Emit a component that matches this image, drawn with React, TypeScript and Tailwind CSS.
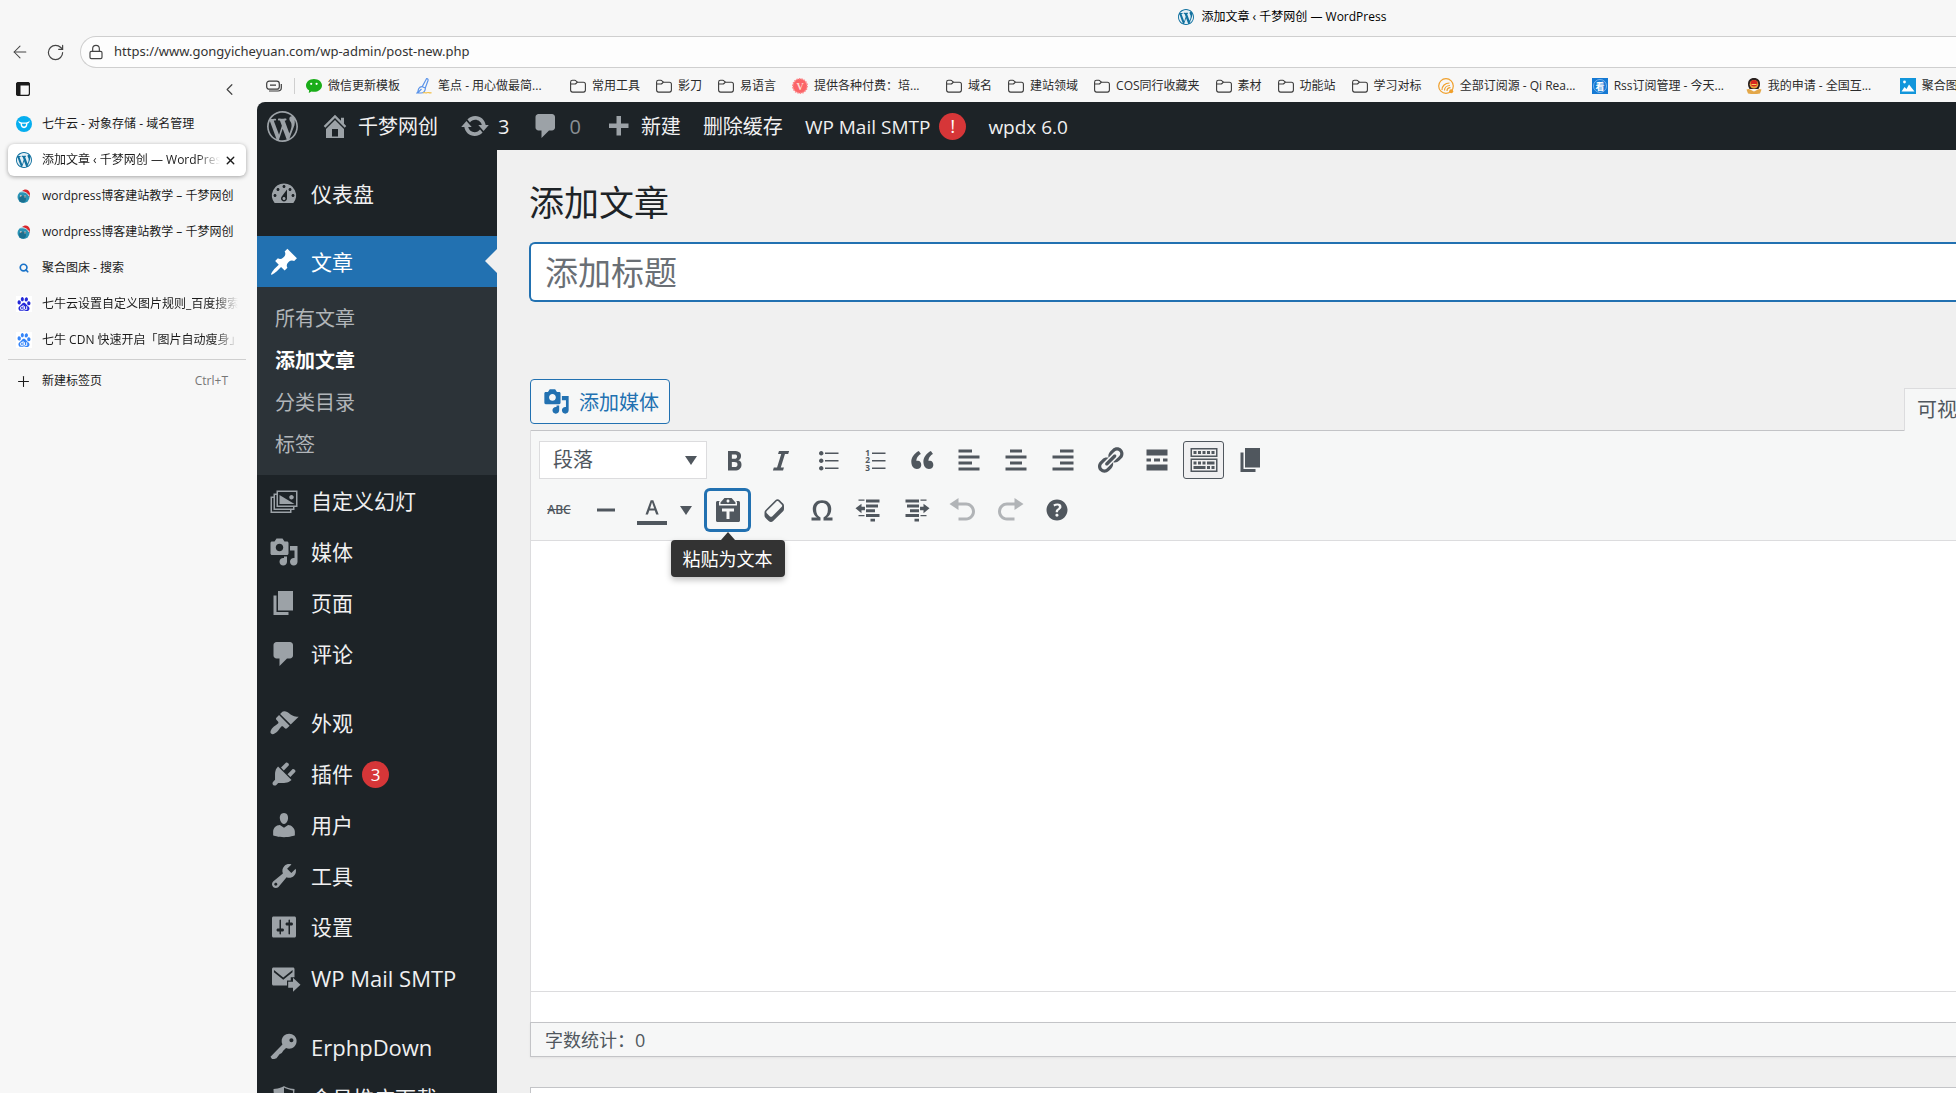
import React from 'react';
import { ArrowLeft, ChevronLeft, Lock, Plus, RotateCw, Search, X } from 'lucide-react';
import { SiBaidu } from 'react-icons/si';

const ICONS = {
    wordpress: 'M20 10c0-5.51-4.49-10-10-10C4.48 0 0 4.49 0 10c0 5.52 4.48 10 10 10 5.51 0 10-4.48 10-10zM7.78 15.37L4.37 6.22c.55-.02 1.17-.08 1.17-.08.5-.06.44-1.13-.06-1.11 0 0-1.45.11-2.37.11-.18 0-.37 0-.58-.01C4.12 2.69 6.87 1.11 10 1.11c2.33 0 4.45.87 6.05 2.34-.68-.11-1.65.39-1.65 1.58 0 .74.45 1.36.9 2.1.35.61.55 1.36.55 2.46 0 1.49-1.4 5-1.4 5l-3.03-8.37c.54-.02.82-.17.82-.17.5-.05.44-1.25-.06-1.22 0 0-1.44.12-2.38.12-.87 0-2.33-.12-2.33-.12-.5-.03-.56 1.2-.06 1.22l.92.08 1.26 3.41zM17.41 10c.24-.64.74-1.87.43-4.25.7 1.29 1.05 2.71 1.05 4.25 0 3.29-1.73 6.24-4.4 7.78.97-2.59 1.94-5.2 2.92-7.78zM6.1 18.09C3.12 16.65 1.11 13.53 1.11 10c0-1.3.23-2.48.72-3.59C3.25 10.3 4.67 14.2 6.1 18.09zm4.03-6.63l2.58 6.98c-.86.29-1.76.45-2.71.45-.79 0-1.57-.11-2.29-.33.81-2.38 1.62-4.74 2.42-7.1z',
    home: 'M16 8.5l1.53 1.53-1.06 1.06L10 4.6l-6.47 6.49-1.06-1.06L10 2.5l4 4v-2h2v4zm-6-2.46l6 5.99V18H4v-5.97zM12 17v-5H8v5h4z',
    update: 'M10.2 3.28c3.53 0 6.43 2.61 6.92 6h2.08l-3.5 4-3.5-4h2.32c-.45-1.97-2.21-3.45-4.32-3.45-1.45 0-2.73.71-3.54 1.78L4.95 5.66C6.23 4.2 8.11 3.28 10.2 3.28zm-.4 13.44c-3.52 0-6.43-2.61-6.92-6H.8l3.5-4c1.17 1.33 2.33 2.67 3.5 4H5.48c.45 1.97 2.21 3.45 4.32 3.45 1.45 0 2.73-.71 3.54-1.78l1.71 1.95c-1.28 1.46-3.15 2.38-5.25 2.38z',
    comments: 'M5 2h9c1.1 0 2 .9 2 2v7c0 1.1-.9 2-2 2h-2l-5 5v-5H5c-1.1 0-2-.9-2-2V4c0-1.1.9-2 2-2z',
    plus: 'M17 7v3h-5v5H9v-5H4V7h5V2h3v5h5z',
    dashboard: 'M3.76 16h12.48A7.998 7.998 0 0 0 10 3a7.998 7.998 0 0 0-6.24 13zM10 4c.55 0 1 .45 1 1s-.45 1-1 1-1-.45-1-1 .45-1 1-1zM6 6c.55 0 1 .45 1 1s-.45 1-1 1-1-.45-1-1 .45-1 1-1zm8 0c.55 0 1 .45 1 1s-.45 1-1 1-1-.45-1-1 .45-1 1-1zm-5.37 5.55L12 7v6c0 1.1-.9 2-2 2s-2-.9-2-2c0-.57.24-1.08.63-1.45zM4 10c.55 0 1 .45 1 1s-.45 1-1 1-1-.45-1-1 .45-1 1-1zm12 0c.55 0 1 .45 1 1s-.45 1-1 1-1-.45-1-1 .45-1 1-1zm-5 3c0-.55-.45-1-1-1s-1 .45-1 1 .45 1 1 1 1-.45 1-1z',
    pin: 'M10.44 3.02l1.82-1.82 6.36 6.35-1.83 1.82c-1.05-.68-2.48-.57-3.41.36l-.75.75c-.92.93-1.04 2.35-.35 3.41l-1.83 1.82-2.41-2.41-2.8 2.79c-.42.42-3.38 2.71-3.8 2.29s1.86-3.39 2.28-3.81l2.79-2.79L4.1 9.36l1.83-1.82c1.05.69 2.48.57 3.4-.36l.75-.75c.93-.92 1.05-2.35.36-3.41z',
    slides: 'M5 3h14v11h-2v2h-2v2H1V7h2V5h2V3zm13 10V4H6v9h12zm-3-4c-.83 0-1.5-.67-1.5-1.5S14.17 6 15 6s1.5.67 1.5 1.5S15.83 9 15 9zM7 6l10 6H7V6zm7 11v-1H3V8H2v9h12zm2-2v-1H5V6H4v9h12z',
    media: 'M13 11V4c0-.55-.45-1-1-1h-1.67L9 1H5L3.67 3H2c-.55 0-1 .45-1 1v7c0 .55.45 1 1 1h10c.55 0 1-.45 1-1zM7 4.5c1.38 0 2.5 1.12 2.5 2.5S8.38 9.5 7 9.5 4.5 8.38 4.5 7 5.62 4.5 7 4.5zM14 6h5v10.5c0 1.38-1.12 2.5-2.5 2.5S14 17.88 14 16.5s1.12-2.5 2.5-2.5c.17 0 .34.02.5.05V9h-3V6zm-4 8.05V13h2v3.5c0 1.38-1.12 2.5-2.5 2.5S7 17.88 7 16.5 8.12 14 9.5 14c.17 0 .34.02.5.05z',
    page: 'M6 15V2h10v13H6zm-1 1h8v2H3V5h2v11z',
    appearance: 'M14.48 11.06L7.41 3.99l1.5-1.5c.5-.56 2.3-.47 3.51.32 1.21.8 1.43 1.28 2.91 2.1 1.18.64 2.45 1.26 4.45.85zm-.71.71L6.7 4.7 4.93 6.47c-.39.39-.39 1.02 0 1.41l1.06 1.06c.39.39.39 1.03 0 1.42-.6.6-1.43 1.11-2.21 1.69-.35.26-.7.53-1.01.84C1.43 14.23.4 16.08 1.4 17.07c.99 1 2.84-.03 4.18-1.36.31-.31.58-.66.85-1.02.57-.78 1.08-1.61 1.69-2.21.39-.39 1.02-.39 1.41 0l1.06 1.06c.39.39 1.02.39 1.41 0z',
    plugins: 'M13.11 4.36L9.87 7.6 8 5.73l3.24-3.24c.35-.34 1.05-.2 1.56.32.52.51.66 1.21.31 1.55zm-8 1.77l.91-1.12 9.01 9.01-1.19.84c-.71.71-2.63 1.16-3.82 1.16H6.14L4.9 17.26c-.59.59-1.54.59-2.12 0-.59-.58-.59-1.53 0-2.12l1.24-1.24v-3.88c0-1.13.4-3.19 1.09-3.89zm7.26 3.97l3.24-3.24c.34-.35 1.04-.21 1.55.31.52.51.66 1.21.31 1.55l-3.24 3.25z',
    users: 'M10 9.25c-2.27 0-2.73-3.44-2.73-3.44C7 4.02 7.82 2 9.97 2c2.16 0 2.98 2.02 2.71 3.81 0 0-.41 3.44-2.68 3.44zm0 2.57L12.72 10c2.39 0 4.52 2.33 4.52 4.53v2.49s-3.65 1.13-7.24 1.13c-3.65 0-7.24-1.13-7.24-1.13v-2.49c0-2.25 1.94-4.48 4.47-4.48z',
    tools: 'M16.68 9.77c-1.34 1.34-3.3 1.67-4.95.99l-5.41 6.52c-.99.99-2.59.99-3.58 0s-.99-2.59 0-3.57l6.52-5.42c-.68-1.65-.35-3.61.99-4.95 1.28-1.28 3.12-1.62 4.72-1.06l-2.89 2.89 2.82 2.82 2.86-2.87c.53 1.58.18 3.39-1.08 4.65zM3.81 16.21c.4.39 1.04.39 1.43 0 .4-.4.4-1.04 0-1.43-.39-.4-1.03-.4-1.43 0-.39.39-.39 1.03 0 1.43z',
    settings: 'M18 16V4c0-.55-.45-1-1-1H3c-.55 0-1 .45-1 1v12c0 .55.45 1 1 1h14c.55 0 1-.45 1-1zM8 11h1c.55 0 1 .45 1 1s-.45 1-1 1H8v1.5c0 .28-.22.5-.5.5s-.5-.22-.5-.5V13H6c-.55 0-1-.45-1-1s.45-1 1-1h1V5.5c0-.28.22-.5.5-.5s.5.22.5.5V11zm5-2h-1c-.55 0-1-.45-1-1s.45-1 1-1h1V5.5c0-.28.22-.5.5-.5s.5.22.5.5V7h1c.55 0 1 .45 1 1s-.45 1-1 1h-1v5.5c0 .28-.22.5-.5.5s-.5-.22-.5-.5V9z',
    mail: 'M3 3h13c.55 0 1 .45 1 1v5.5h-2.5v2.2H12V15H3c-.55 0-1-.45-1-1V4c0-.55.45-1 1-1zm.3 1.7v1.5l6.2 4.9 6.2-4.9V4.7l-6.2 4.9zM12.8 12.5h3.2V9.800l5 4.700-5 4.700v-2.700h-3.200z',
    key: 'M16.95 2.58c1.96 1.95 1.96 5.12 0 7.07-1.51 1.51-3.75 1.84-5.59 1.01l-1.87 1.81-.99 1.51-1.5.8L5 17.5 3.5 18H2l-1-1.5 7.95-8.19c-.92-1.87-.62-4.18.93-5.73 1.95-1.96 5.12-1.96 7.07 0zm-2.01 4.29c.74 0 1.33-.6 1.33-1.34 0-.73-.59-1.33-1.33-1.33-.73 0-1.33.6-1.33 1.33 0 .74.6 1.34 1.33 1.34z',
    shield: 'M10 2s3 2 7 2c0 11-7 14-7 14S3 15 3 4c4 0 7-2 7-2zm0 8h5s1-1 1-5c0 0-5-1-6-2v7H5c1 4 5 7 5 7v-7z',
    bold: 'M6 4v13h4.54c1.37 0 2.46-.33 3.26-1 .8-.66 1.2-1.58 1.2-2.77 0-.84-.17-1.51-.51-2.01s-.9-.85-1.67-1.03v-.09c.57-.1 1.02-.4 1.36-.9s.51-1.13.51-1.91c0-1.14-.39-1.98-1.17-2.5C12.75 4.26 11.5 4 9.78 4H6zm2.57 5.15V6.26h1.36c.73 0 1.27.11 1.61.32.34.22.51.58.51 1.07 0 .54-.16.92-.47 1.15s-.82.35-1.51.35h-1.5zm0 2.19h1.6c1.44 0 2.16.53 2.16 1.61 0 .6-.17 1.05-.51 1.34s-.86.43-1.57.43H8.57v-3.38z',
    italic: 'M14.78 6h-2.13l-2.8 9h2.12l-.62 2H4.6l.62-2h2.14l2.8-9H8.03l.62-2h6.75z',
    bullets: 'M5.5 7C4.67 7 4 6.33 4 5.5 4 4.68 4.67 4 5.5 4 6.32 4 7 4.68 7 5.5 7 6.33 6.32 7 5.5 7zM8 5h9v1H8V5zm-2.5 7c-.83 0-1.5-.67-1.5-1.5C4 9.68 4.67 9 5.5 9c.82 0 1.5.68 1.5 1.5 0 .83-.68 1.5-1.5 1.5zM8 10h9v1H8v-1zm-2.5 7c-.83 0-1.5-.67-1.5-1.5 0-.82.67-1.5 1.5-1.5.82 0 1.5.68 1.5 1.5 0 .83-.68 1.5-1.5 1.5zM8 15h9v1H8v-1z',
    quote: 'M9.49 13.22c0-.74-.2-1.38-.61-1.9-.62-.78-1.83-.88-2.53-.72-.29-1.65 1.11-3.75 2.92-4.65L7.88 4c-2.73 1.3-5.42 4.28-4.96 8.05C3.21 14.43 4.59 16 6.54 16c.85 0 1.56-.25 2.12-.75s.83-1.18.83-2.03zm8.05 0c0-.74-.2-1.38-.61-1.9-.63-.78-1.83-.88-2.53-.72-.29-1.65 1.11-3.75 2.92-4.65L15.93 4c-2.73 1.3-5.41 4.28-4.95 8.05.29 2.38 1.66 3.95 3.61 3.95.85 0 1.56-.25 2.12-.75s.83-1.18.83-2.03z',
    alignLeft: 'M12 5V3H3v2h9zm5 4V7H3v2h14zm-5 4v-2H3v2h9zm5 4v-2H3v2h14z',
    alignCenter: 'M14 5V3H6v2h8zm3 4V7H3v2h14zm-3 4v-2H6v2h8zm3 4v-2H3v2h14z',
    alignRight: 'M17 5V3H8v2h9zm0 4V7H3v2h14zm0 4v-2H8v2h9zm0 4v-2H3v2h14z',
    link: 'M17.74 2.76c1.68 1.69 1.68 4.41 0 6.1l-1.53 1.52c-1.12 1.12-2.7 1.47-4.14 1.09l2.62-2.61.76-.77.76-.76c.84-.84.84-2.2 0-3.04-.84-.85-2.2-.85-3.04 0l-.77.76-3.38 3.38c-.37-1.44-.02-3.02 1.1-4.14l1.52-1.53c1.69-1.68 4.42-1.68 6.1 0zM8.59 13.43l5.34-5.34c.42-.42.42-1.1 0-1.52-.44-.43-1.13-.39-1.53 0l-5.33 5.34c-.42.42-.42 1.1 0 1.52.44.43 1.13.39 1.52 0zm-.76 2.29l4.14-4.15c.38 1.44.03 3.02-1.09 4.14l-1.52 1.53c-1.69 1.68-4.41 1.68-6.1 0-1.68-1.68-1.68-4.42 0-6.1l1.53-1.52c1.12-1.12 2.7-1.47 4.14-1.1l-4.14 4.15c-.85.84-.85 2.2 0 3.05.84.84 2.2.84 3.04 0z',
    more: 'M17 7V3H3v4h14zM6 11V9H3v2h3zm6 0V9H8v2h4zm5 0V9h-3v2h3zm0 6v-4H3v4h14z',
    kitchensink: 'M19 2v6H1V2h18zm-1 5V3H2v4h16zM5 4v2H3V4h2zm3 0v2H6V4h2zm3 0v2H9V4h2zm3 0v2h-2V4h2zm3 0v2h-2V4h2zm2 5v9H1V9h18zm-1 8v-7H2v7h16zM5 11v2H3v-2h2zm3 0v2H6v-2h2zm3 0v2H9v-2h2zm6 0v2h-5v-2h5zm-6 3v2H3v-2h8zm3 0v2h-2v-2h2zm3 0v2h-2v-2h2z',
    minus: 'M4 9h12v2H4V9z',
    textColor: 'M13.23 15h1.9L11 4H9L5 15h1.88l1.07-3h4.18zm-1.53-4.54H8.51L10 5.6z',
    paste: 'M12.38 2L15 5v1H5V5l2.64-3h4.74zM10 5c.55 0 1-.44 1-1 0-.55-.45-1-1-1s-1 .45-1 1c0 .56.45 1 1 1zm5.45-1H17c.55 0 1 .45 1 1v12c0 .56-.45 1-1 1H3c-.55 0-1-.44-1-1V5c0-.55.45-1 1-1h1.55L4 4.63V7h12V4.63zM14 11V9H6v2h3v5h2v-5h3z',
    eraser: 'M14.29 4.59l1.1 1.11c.41.4.61.94.61 1.47v2.12c0 .53-.2 1.07-.61 1.47l-6.63 6.63c-.4.41-.94.61-1.47.61s-1.07-.2-1.47-.61l-1.11-1.1-1.1-1.11c-.41-.4-.61-.94-.61-1.47v-2.12c0-.54.2-1.07.61-1.48l6.63-6.62c.4-.41.94-.61 1.47-.61s1.06.2 1.47.61zm-6.21 9.7l6.42-6.42c.39-.39.39-1.03 0-1.43L12.36 4.3c-.19-.19-.45-.29-.72-.29s-.52.1-.71.29l-6.42 6.42c-.39.4-.39 1.04 0 1.43l2.14 2.14c.38.38 1.04.38 1.43 0z',
    omega: 'M10 5.4c1.27 0 2.24.36 2.91 1.08.66.71 1 1.76 1 3.13 0 1.28-.23 2.37-.69 3.27-.47.89-1.27 1.52-2.22 2.12v2h6v-2h-3.69c.92-.64 1.62-1.34 2.12-2.34.49-1.01.74-2.13.74-3.35 0-1.78-.55-3.19-1.65-4.22S11.92 3.54 10 3.54s-3.43.53-4.52 1.57c-1.1 1.04-1.65 2.44-1.65 4.2 0 1.21.24 2.31.73 3.33.48 1.01 1.19 1.71 2.1 2.36H3v2h6v-2c-.98-.64-1.8-1.28-2.24-2.17-.45-.89-.67-1.96-.67-3.22 0-1.37.33-2.41 1-3.13C7.75 5.76 8.72 5.4 10 5.4z',
    outdent: 'M3 3h4v.8H3zM8 3h9v2H8zM8 6.3h8v2H8zM8 9.5h6v2H8zM8 12.6h9v2H8zM11 15.8h3v1.8h-3zM3 13.3h4v.8H3zM7.3 7.8v2.3H5v2L1 8.9 5 5.8v2z',
    indent: 'M13 3h4v.8h-4zM3 3h9v2H3zM4 6.3h8v2H4zM6 9.5h6v2H6zM3 12.6h9v2H3zM9 15.8h3v1.8H9zM13 13.3h4v.8h-4zM12.7 7.8v2.3H15v2l4-3.2-4-3.1v2z',
    undo: 'M12 5H7V2L1 6l6 4V7h5c2.2 0 4 1.8 4 4s-1.8 4-4 4H7v2h5c3.3 0 6-2.7 6-6s-2.7-6-6-6z',
    redo: 'M8 5h5V2l6 4-6 4V7H8c-2.2 0-4 1.8-4 4s1.8 4 4 4h5v2H8c-3.3 0-6-2.7-6-6s2.7-6 6-6z',
    help: 'M17 10c0-3.87-3.14-7-7-7-3.87 0-7 3.13-7 7s3.13 7 7 7c3.86 0 7-3.13 7-7zm-6.3 1.48H9.14v-.43c0-.38.08-.7.24-.98s.46-.57.88-.89c.41-.29.68-.53.81-.71.14-.18.2-.39.2-.62 0-.25-.09-.44-.28-.58-.19-.13-.45-.19-.79-.19-.58 0-1.25.19-2 .57l-.64-1.28c.87-.49 1.8-.74 2.77-.74.81 0 1.45.2 1.92.58.48.39.71.91.71 1.55 0 .43-.09.8-.29 1.11-.19.32-.57.67-1.11 1.06-.38.28-.61.49-.71.63-.1.15-.15.34-.15.57v.35zm-1.47 2.74c-.18-.17-.27-.42-.27-.73 0-.33.08-.58.26-.75s.43-.25.77-.25c.32 0 .57.09.75.26s.27.42.27.74c0 .3-.09.55-.27.72-.18.18-.43.27-.75.27-.33 0-.58-.09-.76-.26z',
};

type IconName = keyof typeof ICONS;

const DashIcon = ({ name, className = 'w-[30px] h-[30px]' }: { name: IconName; className?: string }) => (
    <svg viewBox="0 0 20 20" fill="currentColor" fillRule={name === 'shield' || name === 'mail' ? 'evenodd' : 'nonzero'} className={`shrink-0 overflow-visible ${className}`} aria-hidden="true">
        <path d={ICONS[name]} />
    </svg>
);

/* Favicons */
const WpFavicon = () => (
    <span className="w-4 h-4 shrink-0 rounded-full bg-[#e4eff5] flex">
        <DashIcon name="wordpress" className="w-4 h-4 text-[#11719f]" />
    </span>
);

const QiniuFavicon = () => (
    <svg viewBox="0 0 16 16" className="w-4 h-4 shrink-0">
        <circle cx="8" cy="8" r="8" fill="#06aeef" />
        <path d="M2.5 4.5c.8 1.6 2.3 2 5.5 2s4.7-.4 5.5-2c.2 1.7-.6 2.7-2 3.1-.2 3.2-1.2 4.6-3.5 4.6s-3.3-1.4-3.5-4.6c-1.400-.4-2.200-1.400-2-3.100z" fill="#fff" />
        <path d="M6 7.800h4c0 1.800-.6 2.700-2 2.700s-2-.9-2-2.700z" fill="#06aeef" />
    </svg>
);

const BirdFavicon = () => (
    <svg viewBox="0 0 16 16" className="w-4 h-4 shrink-0">
        <circle cx="7.5" cy="9" r="6" fill="#2a93b5" />
        <circle cx="6.5" cy="11" r="3.5" fill="#1b6f90" />
        <path d="M6 3C8.500 .5 13 .8 14 5.500l-.5 3.500c-1-3-3.500-5-7.500-6z" fill="#d8262c" />
        <path d="M4.500 4c3-.8 7 .6 8.500 4" stroke="#fff" strokeWidth=".8" fill="none" />
        <circle cx="5" cy="8" r="1.100" fill="#cfe6ee" />
        <circle cx="9" cy="8.500" r="1.100" fill="#cfe6ee" />
        <circle cx="5.200" cy="8.200" r=".6" fill="#222" />
        <circle cx="9" cy="8.700" r=".6" fill="#222" />
    </svg>
);

const FolderIcon = () => (
    <svg viewBox="0 0 16 16" fill="none" stroke="#3b3b3b" strokeWidth="1.1" className="w-4 h-4 shrink-0">
        <path d="M.6 4.2c0-1.2.7-1.9 1.9-1.9h2.3c.5 0 .9.2 1.2.5l1.500 1.400h5.900c1.200 0 2 .8 2 2v5.900c0 1.200-.8 2-2 2H2.600c-1.200 0-2-.8-2-2z" />
        <path d="M.7 6h4.100c.5 0 .9-.2 1.200-.5l1.400-1.300" />
    </svg>
);

const WechatIcon = () => (
    <svg viewBox="0 0 16 16" className="w-4 h-4 shrink-0">
        <path d="M8 1c4.4 0 8 2.8 8 6.4s-3.6 6.4-8 6.4c-.9 0-1.7-.1-2.5-.3L2.8 15l.3-2.7C1.2 11.2 0 9.4 0 7.4 0 3.8 3.6 1 8 1z" fill="#1aad19" />
        <circle cx="5.2" cy="5.8" r="1.1" fill="#fff" />
        <circle cx="10.6" cy="5.8" r="1.1" fill="#fff" />
    </svg>
);

const PenIcon = () => (
    <svg viewBox="0 0 16 16" fill="none" className="w-4 h-4 shrink-0">
        <path d="M10.5.7c1.3-.2 1.8.5 1.5 1.800L9.300 10 6.200 8.700zM6.200 8.700L9.300 10c.3 3-1.800 5-4.300 5H1c1.500-1 .8-2.800 1.800-4.500.8-1.300 2-1.900 3.400-1.800zM2 14.500l3.500-3.500" stroke="#5b94ea" strokeWidth="1.2" />
        <path d="M7 15c1.500-1.300 2.500.5 4-.3s2 .6 4.500-.1" stroke="#f2c14e" strokeWidth="1.2" />
    </svg>
);

const VipIcon = () => (
    <svg viewBox="0 0 16 16" className="w-4 h-4 shrink-0">
        <circle cx="8" cy="8" r="7.2" fill="#fb6467" stroke="#fb8a8c" strokeWidth="1.5" strokeDasharray="1.5 1" />
        <text x="8" y="12" fontSize="10" fontWeight="700" textAnchor="middle" fill="#ffd9d4" fontFamily="Liberation Serif, serif">V</text>
    </svg>
);

const RssIcon = () => (
    <svg viewBox="0 0 16 16" fill="none" stroke="#f0a02c" className="w-4 h-4 shrink-0">
        <circle cx="8" cy="8" r="7.3" strokeWidth="1.2" />
        <path d="M4 12C4 8 7 5 11.500 5M6.500 12.500c0-3 2.300-5 5.500-5M9 13c0-2 1.300-3.300 3.500-3.300" strokeWidth="1.2" />
        <circle cx="13.2" cy="13.2" r="2" fill="#f0a02c" stroke="none" />
    </svg>
);

const KanIcon = () => (
    <svg viewBox="0 0 16 16" className="w-4 h-4 shrink-0">
        <rect width="16" height="16" fill="#1579d3" />
        <circle cx="8" cy="8" r="6.5" fill="none" stroke="#8fc4f5" strokeWidth=".8" />
        <text x="8" y="11.5" fontSize="9" fontWeight="700" textAnchor="middle" fill="#fff" fontFamily="Noto Sans CJK SC, sans-serif">看</text>
    </svg>
);

const PoliceIcon = () => (
    <svg viewBox="0 0 16 16" className="w-4 h-4 shrink-0">
        <path d="M8 0c4 0 6 2.5 6 6 0 2-.7 3.500-1.500 5H3.500C2.700 9.500 2 8 2 6c0-3.500 2-6 6-6z" fill="#2a211f" />
        <circle cx="8" cy="6.200" r="4.300" fill="#e9a13b" />
        <circle cx="8" cy="5.200" r="3.300" fill="#d7281f" />
        <path d="M5.500 6h5v1h-5z" fill="#f6d35a" />
        <path d="M.5 11.500c1.500-.8 3-.7 4 .3l3.500 1.700 3.500-1.700c1-1 2.500-1.100 4-.3L14 15.500l-3 .5H5l-3-.5z" fill="#e3a748" />
    </svg>
);

const PictureIcon = () => (
    <svg viewBox="0 0 16 16" className="w-4 h-4 shrink-0">
        <rect width="16" height="16" fill="#1296db" />
        <circle cx="4.500" cy="4" r="1.400" fill="#fff" />
        <path d="M1.500 13.500l3-4.500 2 2 2.500-4.500 5.500 7z" fill="#fff" />
    </svg>
);

const sideTabs = [
    { title: '七牛云 - 对象存储 - 域名管理', icon: <QiniuFavicon /> },
    { title: '添加文章 ‹ 千梦网创 — WordPress', icon: <WpFavicon />, active: true, fade: true },
    { title: 'wordpress博客建站教学 – 千梦网创', icon: <BirdFavicon /> },
    { title: 'wordpress博客建站教学 – 千梦网创', icon: <BirdFavicon /> },
    { title: '聚合图床 - 搜索', icon: <Search className="w-4 h-4 p-[3px] shrink-0 text-[#1a73c9]" strokeWidth={4} /> },
    { title: '七牛云设置自定义图片规则_百度搜索', icon: <SiBaidu className="w-4 h-4 p-px shrink-0 bg-white text-[#2529d8]" />, fade: true },
    { title: '七牛 CDN 快速开启「图片自动瘦身」', icon: <SiBaidu className="w-4 h-4 p-px shrink-0 bg-white text-[#3585f9]" />, fade: true },
];

const bookmarks = [
    { title: '微信更新模板', icon: <WechatIcon /> },
    { title: '笔点 - 用心做最简...', icon: <PenIcon />, long: true },
    { title: '常用工具', icon: <FolderIcon /> },
    { title: '影刀', icon: <FolderIcon /> },
    { title: '易语言', icon: <FolderIcon /> },
    { title: '提供各种付费：培...', icon: <VipIcon />, long: true },
    { title: '域名', icon: <FolderIcon /> },
    { title: '建站领域', icon: <FolderIcon /> },
    { title: 'COS同行收藏夹', icon: <FolderIcon /> },
    { title: '素材', icon: <FolderIcon /> },
    { title: '功能站', icon: <FolderIcon /> },
    { title: '学习对标', icon: <FolderIcon /> },
    { title: '全部订阅源 - Qi Rea...', icon: <RssIcon />, long: true },
    { title: 'Rss订阅管理 - 今天...', icon: <KanIcon />, long: true },
    { title: '我的申请 - 全国互...', icon: <PoliceIcon />, long: true },
    { title: '聚合图', icon: <PictureIcon /> },
];

const menuGroups: { label: string; icon: IconName; badge?: number }[][] = [
    [
        { label: '自定义幻灯', icon: 'slides' },
        { label: '媒体', icon: 'media' },
        { label: '页面', icon: 'page' },
        { label: '评论', icon: 'comments' },
    ],
    [
        { label: '外观', icon: 'appearance' },
        { label: '插件', icon: 'plugins', badge: 3 },
        { label: '用户', icon: 'users' },
        { label: '工具', icon: 'tools' },
        { label: '设置', icon: 'settings' },
        { label: 'WP Mail SMTP', icon: 'mail' },
    ],
    [
        { label: 'ErphpDown', icon: 'key' },
        { label: '会员推广下载', icon: 'shield' },
    ],
];

const MenuItem = ({ label, icon, badge }: { label: string; icon: IconName; badge?: number }) => (
    <a href="#" className="flex items-center h-[51px] pl-3 text-[#f0f0f1] whitespace-nowrap">
        <DashIcon name={icon} className="w-[30px] h-[30px] text-[#9ca2a7]" />
        <span className={`ml-3 pt-[2px] ${/^[A-Z]/.test(label) ? 'text-[22px]' : 'text-[21px]'}`}>{label}</span>
        {badge && (
            <span className="ml-[9px] mt-[2px] w-[27px] h-[27px] rounded-full bg-[#d63638] text-white text-[17px] flex items-center justify-center">{badge}</span>
        )}
    </a>
);

const ToolButton = ({ name, label, active, disabled }: { name: IconName; label: string; active?: boolean; disabled?: boolean }) => (
    <button
        aria-label={label}
        disabled={disabled}
        className={`w-[41px] h-[38px] shrink-0 flex items-center justify-center rounded-[3px] border ${active ? 'border-[#50575e] bg-[#f0f0f1]' : 'border-transparent'} ${disabled ? 'text-[#b1b4b7]' : 'text-[#50575e]'}`}
    >
        <DashIcon name={name} />
    </button>
);

const Caret = () => <span className="border-x-[6px] border-x-transparent border-t-[9px] border-t-[#50575e]" />;

function BrowserHeader() {
    return (
        <header className="shrink-0">
            <div className="h-9 pb-[2px] pl-[60.2%] flex items-center gap-2 text-xs text-black whitespace-nowrap">
                <WpFavicon />
                <span>添加文章 ‹ 千梦网创 — WordPress</span>
            </div>
            <div className="flex items-center h-8 pl-[10px]">
                <button aria-label="返回"><ArrowLeft className="w-5 h-5 text-[#444]" strokeWidth={1.25} /></button>
                <button aria-label="刷新" className="ml-4"><RotateCw className="w-[19px] h-[19px] text-[#444]" strokeWidth={1.5} /></button>
                <div className="ml-[15px] flex-1 h-8 flex items-center gap-[10px] pl-[7px] bg-[#fdfdfd] border border-r-0 border-[#cfcfcf] rounded-l-full">
                    <Lock className="w-4 h-4 text-[#444] shrink-0" strokeWidth={1.75} />
                    <input
                        aria-label="地址"
                        className="flex-1 bg-transparent outline-none text-[13px] font-['Noto_Sans',sans-serif] text-[#333]"
                        defaultValue="https://www.gongyicheyuan.com/wp-admin/post-new.php"
                    />
                </div>
            </div>
        </header>
    );
}

function VerticalTabs() {
    return (
        <aside className="w-[257px] shrink-0 text-xs text-[#1b1b1b]">
            <div className="flex items-center justify-between h-[38px] pt-1 pl-4 pr-[18px]">
                <svg viewBox="0 0 14 14" className="w-[14px] h-[14px]">
                    <rect x=".6" y=".6" width="12.8" height="12.8" rx="2" fill="none" stroke="#1b1b1b" strokeWidth="1.2" />
                    <path d="M0 2c0-1 1-2 2-2h10c1 0 2 1 2 2v1.500H4.500V14H2c-1 0-2-1-2-2z" fill="#1b1b1b" />
                </svg>
                <button aria-label="收起"><ChevronLeft className="w-[19px] h-[19px] text-[#444]" strokeWidth={1.5} /></button>
            </div>
            <ul>
                {sideTabs.map((tab, i) => (
                    <li key={i} className="h-9 flex items-center pl-2 pr-[11px]">
                        <a
                            href="#"
                            className={`flex-1 min-w-0 h-8 flex items-center pl-2 pr-2 rounded-md ${tab.active ? 'bg-white shadow-[0_1px_4px_rgba(0,0,0,0.35)]' : ''}`}
                        >
                            {tab.icon}
                            <span className={`ml-[10px] flex-1 overflow-hidden whitespace-nowrap ${tab.fade ? '[mask-image:linear-gradient(to_right,black_calc(100%-24px),transparent)]' : ''}`}>{tab.title}</span>
                            {tab.active && <X className="ml-1 mr-px w-[13px] h-[13px] shrink-0" strokeWidth={2.5} />}
                        </a>
                    </li>
                ))}
            </ul>
            <div className="ml-2 mr-[11px] mt-px border-t border-[#cfcfcf]" />
            <button className="w-full h-[42px] flex items-center pl-[15px] pr-[29px]">
                <Plus className="w-[17px] h-[17px]" strokeWidth={1.5} />
                <span className="ml-[10px]">新建标签页</span>
                <span className="ml-auto text-[#767676]">Ctrl+T</span>
            </button>
        </aside>
    );
}

function BookmarkBar() {
    return (
        <nav className="h-[34px] pt-[2px] shrink-0 flex items-center pl-[9px] text-xs text-[#2b2b2b] whitespace-nowrap overflow-hidden">
            <svg viewBox="0 0 16 16" fill="none" stroke="#3b3b3b" strokeWidth="1.2" className="w-4 h-4 shrink-0">
                <rect x=".7" y="3.2" width="12.6" height="8" rx="2.5" />
                <path d="M4 7.200h6M3 13h9c2 0 3.300-1.300 3.300-3.200V6" />
            </svg>
            <span className="ml-3 mr-[11px] w-px h-4 bg-[#cfcfcf] shrink-0" />
            <div className="flex items-center gap-4">
                {bookmarks.map(b => (
                    <a key={b.title} href="#" className="flex items-center gap-[6px] shrink-0">
                        {b.icon}
                        <span className={b.long ? 'w-[116px]' : ''}>{b.title}</span>
                    </a>
                ))}
            </div>
        </nav>
    );
}

function AdminBar() {
    return (
        <nav className="h-12 shrink-0 bg-[#1d2327] flex items-center gap-[22px] pl-[10px] text-xl text-[#f0f0f1] whitespace-nowrap">
            <a href="#" aria-label="WordPress"><DashIcon name="wordpress" className="w-[31px] h-[31px] text-[#9ca2a7]" /></a>
            <a href="#" className="flex items-center gap-2">
                <DashIcon name="home" className="w-[30px] h-[30px] text-[#9ca2a7]" />
                <span className="pt-[2px]">千梦网创</span>
            </a>
            <a href="#" className="flex items-center gap-2">
                <DashIcon name="update" className="w-[30px] h-[30px] text-[#9ca2a7]" />
                <span className="pt-[2px]">3</span>
            </a>
            <a href="#" className="flex items-center gap-2 text-[#8a8f94]">
                <DashIcon name="comments" className="w-[30px] h-[30px] text-[#9ca2a7]" />
                <span className="pt-[2px]">0</span>
            </a>
            <a href="#" className="flex items-center gap-2">
                <DashIcon name="plus" className="mt-[3px] w-[30px] h-[30px] text-[#9ca2a7]" />
                <span className="pt-[2px]">新建</span>
            </a>
            <a href="#" className="pt-[2px]">删除缓存</a>
            <a href="#" className="flex items-center text-[19px]">
                <span className="pt-[2px]">WP Mail SMTP</span>
                <span className="ml-[9px] w-[27px] h-[27px] rounded-full bg-[#d63638] text-white flex items-center justify-center">!</span>
            </a>
            <a href="#" className="pt-[2px] text-[19px]">wpdx 6.0</a>
        </nav>
    );
}

function AdminMenu() {
    return (
        <aside className="w-[240px] shrink-0 bg-[#1d2327] pt-[18px]">
            <MenuItem label="仪表盘" icon="dashboard" />
            <a href="#" className="relative mt-[17px] h-[51px] pl-3 flex items-center bg-[#2271b1] text-white text-[21px]">
                <DashIcon name="pin" />
                <span className="ml-3 pt-[2px]">文章</span>
                <span className="absolute right-0 top-[13px] border-y-[12px] border-y-transparent border-r-[12px] border-r-[#f0f0f0]" />
            </a>
            <ul className="bg-[#2c3338] pt-[11px] pb-[9px] text-xl text-[#b1b5b9]">
                {['所有文章', '添加文章', '分类目录', '标签'].map(item => (
                    <li key={item}>
                        <a href="#" className={`h-[42px] pl-[18px] flex items-center ${item === '添加文章' ? 'font-bold text-white' : ''}`}>{item}</a>
                    </li>
                ))}
            </ul>
            {menuGroups.map((group, i) => (
                <div key={i} className="mb-[18px]">
                    {group.map(item => <MenuItem key={item.label} {...item} />)}
                </div>
            ))}
        </aside>
    );
}

function Editor() {
    return (
        <section>
            <div className="flex justify-between items-end h-[51px]">
                <button className="self-start w-[140px] h-[45px] flex items-center pl-3 border border-[#2271b1] rounded-[4px] bg-[#f6f7f7] text-[#2271b1] text-xl whitespace-nowrap">
                    <DashIcon name="media" className="w-[27px] h-[27px]" />
                    <span className="ml-[9px] pt-[2px]">添加媒体</span>
                </button>
                <button className="relative z-10 -mb-px w-[52px] h-[43px] pl-3 border border-b-0 border-r-0 border-[#dcdcde] bg-[#f6f7f7] text-[#50575e] text-xl text-left whitespace-nowrap overflow-hidden">可视</button>
            </div>

            <div className="border-l border-[#dcdcde]">
                <div className="border-t border-t-[#c3c4c7] border-b border-b-[#dcdcde] bg-[#f6f7f7] h-[111px] pt-[10px] pl-2">
                    <div className="flex items-center gap-[6px]">
                        <div className="relative w-[168px] h-[38px] shrink-0">
                            <select aria-label="段落格式" className="appearance-none w-full h-full pl-[13px] border border-[#dcdcde] bg-white text-[#50575e] text-xl outline-none">
                                <option>段落</option>
                            </select>
                            <span className="absolute right-[10px] top-[15px] pointer-events-none flex"><Caret /></span>
                        </div>
                        <ToolButton name="bold" label="粗体" />
                        <ToolButton name="italic" label="斜体" />
                        <ToolButton name="bullets" label="项目符号列表" />
                        <button aria-label="编号列表" className="w-[41px] h-[38px] shrink-0 flex items-center justify-center text-[#50575e]">
                            <svg viewBox="0 0 20 20" fill="currentColor" className="w-[30px] h-[30px]">
                                <path d="M8 5h9v1H8zM8 10h9v1H8zM8 15h9v1H8z" />
                                <g fontSize="5.5" fontWeight="700" fontFamily="Open Sans, sans-serif">
                                    <text x="3.5" y="7">1</text>
                                    <text x="3.5" y="12.3">2</text>
                                    <text x="3.5" y="17.6">3</text>
                                </g>
                            </svg>
                        </button>
                        <ToolButton name="quote" label="段落引用" />
                        <ToolButton name="alignLeft" label="左对齐" />
                        <ToolButton name="alignCenter" label="居中对齐" />
                        <ToolButton name="alignRight" label="右对齐" />
                        <ToolButton name="link" label="插入链接" />
                        <ToolButton name="more" label="插入More标签" />
                        <ToolButton name="kitchensink" label="工具栏开关" active />
                        <ToolButton name="page" label="分页" />
                    </div>
                    <div className="flex items-center gap-[6px] mt-3">
                        <button aria-label="删除线" className="w-10 h-[38px] shrink-0 text-xs font-semibold text-[#50575e] line-through">ABC</button>
                        <ToolButton name="minus" label="水平线" />
                        <button aria-label="文字颜色" className="w-[69px] h-[38px] pl-[5px] shrink-0 flex items-center gap-[13px] text-[#50575e]">
                            <span className="border-b-4 border-[#50575e]">
                                <DashIcon name="textColor" className="w-[30px] h-[26px]" />
                            </span>
                            <Caret />
                        </button>
                        <div className="relative">
                            <button aria-label="粘贴为文本" className="w-[41px] h-[38px] flex items-center justify-center rounded-[3px] bg-[#f6f7f7] text-[#50575e] ring-3 ring-[#2271b1]">
                                <DashIcon name="paste" />
                            </button>
                            <div role="tooltip" className="absolute z-10 top-[41px] left-1/2 -translate-x-1/2 flex flex-col items-center">
                                <span className="border-x-[7px] border-x-transparent border-b-[8px] border-b-[#333]" />
                                <span className="h-[37px] px-3 flex items-center rounded-[4px] bg-[#333] text-white text-lg whitespace-nowrap shadow-[0_3px_6px_rgba(0,0,0,0.25)]">粘贴为文本</span>
                            </div>
                        </div>
                        <ToolButton name="eraser" label="清除格式" />
                        <ToolButton name="omega" label="特殊字符" />
                        <ToolButton name="outdent" label="减少缩进量" />
                        <ToolButton name="indent" label="增加缩进量" />
                        <ToolButton name="undo" label="撤销" disabled />
                        <ToolButton name="redo" label="重做" disabled />
                        <ToolButton name="help" label="键盘快捷键" />
                    </div>
                </div>
                <textarea aria-label="正文" className="block w-full h-[450px] p-4 resize-none outline-none bg-white text-xl" />
                <div className="h-[31px] bg-white border-t border-[#dcdcde]" />
            </div>
            <div className="h-[35px] pl-[14px] flex items-center border border-r-0 border-[#c3c4c7] bg-[#f6f7f7] text-lg text-[#50575e] shadow-[0_1px_2px_rgba(0,0,0,0.06)]">
                字数统计：0
            </div>
        </section>
    );
}

export default function App() {
    return (
        <div className="h-screen overflow-hidden flex flex-col bg-[#f7f7f7] font-['Open_Sans','Noto_Sans_CJK_SC',sans-serif]">
            <BrowserHeader />
            <div className="flex-1 min-h-0 flex">
                <VerticalTabs />
                <div className="flex-1 min-w-0 flex flex-col">
                    <BookmarkBar />
                    <div className="flex-1 min-h-0 flex flex-col rounded-tl-lg overflow-hidden">
                        <AdminBar />
                        <div className="flex-1 min-h-0 flex">
                            <AdminMenu />
                            <main className="flex-1 min-w-0 bg-[#f0f0f0] pl-8 pt-[31px] text-[#3c434a]">
                                <h1 className="text-[35px] leading-[44px] text-[#1d2327]">添加文章</h1>
                                <input
                                    aria-label="标题"
                                    placeholder="添加标题"
                                    className="block mt-[17px] w-full h-[60px] pl-[14px] text-[33px] bg-white border-2 border-r-0 border-[#2271b1] rounded-l-[6px] outline-none placeholder:text-[#6a6f75]"
                                />
                                <div className="mt-[77px] pl-px">
                                    <Editor />
                                    <div className="mt-[30px] h-20 bg-white border border-r-0 border-[#c3c4c7]" />
                                </div>
                            </main>
                        </div>
                    </div>
                </div>
            </div>
        </div>
    );
}
